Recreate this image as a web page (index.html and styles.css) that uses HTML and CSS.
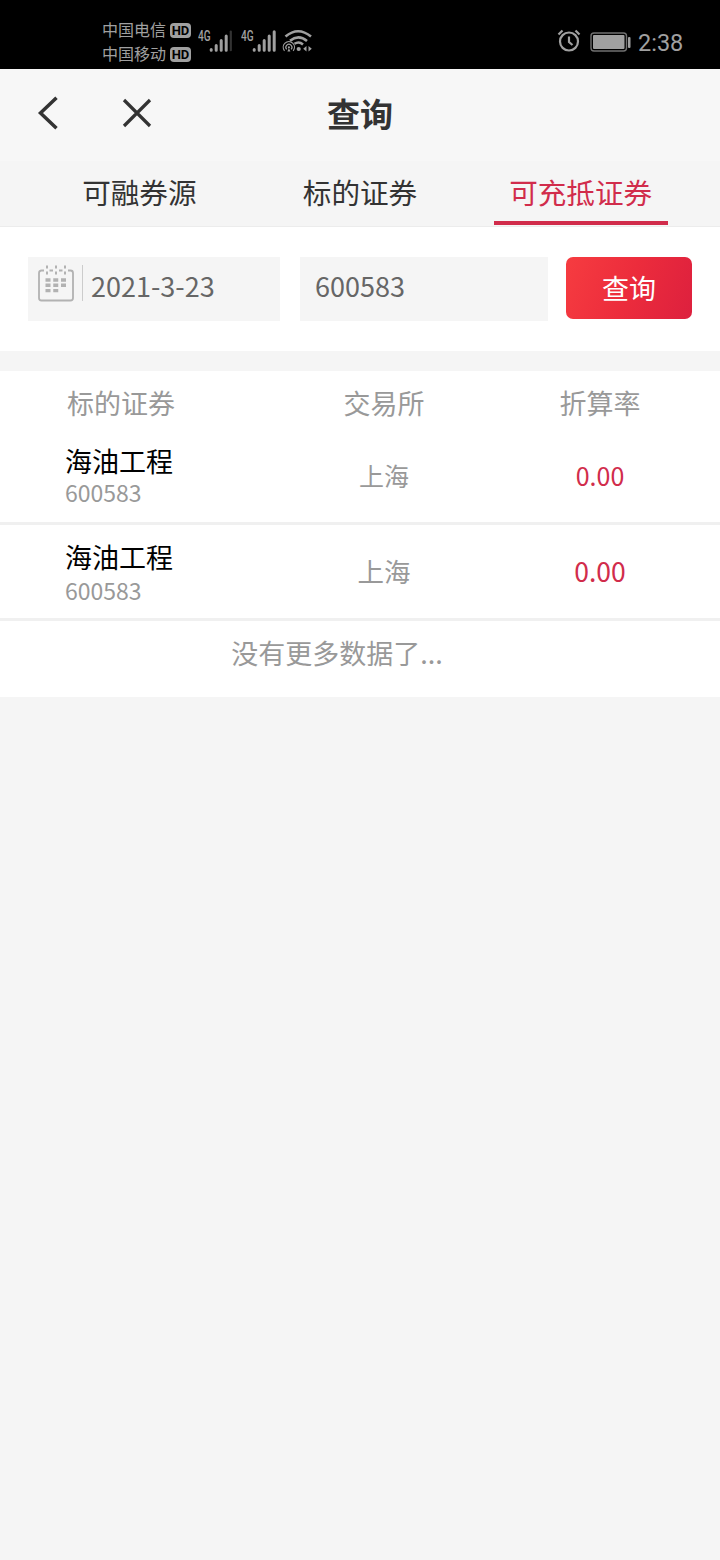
FILE: index.html
```html
<!DOCTYPE html>
<html lang="zh-CN">
<head>
	<meta charset="utf-8">
	<title>查询</title>
	<link rel="stylesheet" href="styles.css">
</head>
<body>
	<div class="status-bar">
		<div class="carriers">
			<div class="carrier">中国电信<span class="hd">HD</span></div>
			<div class="carrier">中国移动<span class="hd">HD</span></div>
		</div>
		<div class="signal">
			<span class="net">4G</span>
			<svg width="23" height="24" viewBox="0 0 23 24" stroke="#a0a0a0" stroke-width="3" stroke-linecap="round">
				<path d="M2.2 20.5v.7M7.200 16.5v4.7M12.200 11.5v9.7M17.200 7v14.2"/>
				<path d="M21.8 2.5v18.7" stroke="#333" stroke-width="2.2"/>
			</svg>
		</div>
		<div class="signal">
			<span class="net">4G</span>
			<svg width="24" height="24" viewBox="0 0 24 24" stroke="#a0a0a0" stroke-width="3" stroke-linecap="round">
				<path d="M2.2 20.5v.7M7.2 16.5v4.7M12.2 11.5v9.7M17.2 7v14.2M22.2 2.7v18.5"/>
			</svg>
		</div>
		<svg class="wifi" width="31" height="24" viewBox="0 0 31 24" fill="none" stroke="#a0a0a0">
			<path d="M3.5 7.5Q16-3 29 7.5M8 11.8Q16.5 5 25 12" stroke-width="2.6"/>
			<path d="M12.5 14.8Q17 11.8 21 15.5" stroke-width="2.4"/>
			<path d="M2.5 21.8a5.6 5.6 0 1 1 8.7 0M4.7 20.3a3 3 0 1 1 4.4 0" stroke-width="1.2"/>
			<circle cx="6.9" cy="18.3" r="1.1" fill="#a0a0a0" stroke="none"/>
			<path d="M5.4 22.5l1.5-3.5 1.5 3.5z" fill="#a0a0a0" stroke="none"/>
			<circle cx="16.7" cy="20" r="2.1" fill="#a0a0a0" stroke="none"/>
			<path d="M24.5 17v5.5l-3.3-2.7zM26.5 17v5.5l3.3-2.7z" fill="#a0a0a0" stroke="none"/>
		</svg>
		<svg class="alarm" width="24" height="24" viewBox="0 0 24 24" fill="none" stroke="#a0a0a0" stroke-width="2.2">
			<circle cx="12" cy="12.5" r="9"/>
			<path d="M12 7.5v5.500l3.5 3M1.5 5.500L5.5 1.5M22.5 5.5l-4-4"/>
		</svg>
		<svg class="battery" width="42" height="22" viewBox="0 0 42 22">
			<rect x="1" y="2" width="35.5" height="18" rx="3" fill="none" stroke="#707070" stroke-width="1.4"/>
			<rect x="3" y="4" width="31.5" height="14" rx="1" fill="#a0a0a0"/>
			<rect x="38" y="6" width="2.5" height="11" rx="1" fill="#a0a0a0"/>
		</svg>
		<span class="clock">2:38</span>
	</div>

	<div class="header">
		<svg class="back" width="24" height="36" viewBox="0 0 24 36" fill="none" stroke="#333" stroke-width="3.5">
			<path d="M20.5 2.7L4.5 18l16 15.3"/>
		</svg>
		<svg class="close" width="30" height="30" viewBox="0 0 30 30" fill="none" stroke="#333" stroke-width="3.2">
			<path d="M2 2l26 26M28 2L2 28"/>
		</svg>
		<h1>查询</h1>
	</div>

	<div class="tabs">
		<div class="tab">可融券源</div>
		<div class="tab">标的证券</div>
		<div class="tab active">可充抵证券</div>
	</div>

	<div class="search">
		<div class="field date">
			<svg width="36" height="38" viewBox="0 0 36 38" fill="none" stroke="#b2b2b2">
				<path d="M6 5.5H3.5q-2.500 0-2.500 2.500v25q0 2.500 2.500 2.500h29q2.500 0 2.500-2.500V8q0-2.500-2.500-2.500H30M11.5 5.5h3.500M21 5.5h3.500" stroke-width="1.8"/>
				<path d="M9 .5v3M9 6.5v3M18 .5v3M18 6.5v3M27 .5v3M27 6.5v3" stroke-width="2"/>
				<path d="M7.5 15h20.500M7.5 20.300h20.500" stroke-width="3.4" stroke-dasharray="5 2.750"/>
				<path d="M7.5 25.600h12.750" stroke-width="3.4" stroke-dasharray="5 2.750"/>
			</svg>
			<span class="date-text">2021-3-23</span>
		</div>
		<div class="field code-field">600583</div>
		<button class="submit">查询</button>
	</div>

	<div class="list">
		<div class="row head">
			<div class="name">标的证券</div>
			<div>交易所</div>
			<div>折算率</div>
		</div>
		<div class="row first">
			<div class="stock">
				<div class="stock-name">海油工程</div>
				<div class="stock-code">600583</div>
			</div>
			<div class="market">上海</div>
			<div class="rate">0.00</div>
		</div>
		<div class="row second">
			<div class="stock">
				<div class="stock-name">海油工程</div>
				<div class="stock-code">600583</div>
			</div>
			<div class="market">上海</div>
			<div class="rate">0.00</div>
		</div>
		<div class="no-more">没有更多数据了...</div>
	</div>
</body>
</html>
```

FILE: styles.css
```css
* {
	box-sizing: border-box;
}

body {
	margin: 0;
	min-height: 1560px;
	background-color: #f5f5f5;
	font-family: "Noto Sans CJK SC", sans-serif;
	color: #333;
}

svg {
	display: block;
	flex: none;
}

/* status bar */
.status-bar {
	display: flex;
	align-items: flex-start;
	height: 69px;
	padding: 18px 0 0 102px;
	background-color: #000;
	color: #a0a0a0;
}

.carriers {
	width: 95px;
}

.carrier {
	display: flex;
	align-items: flex-start;
	height: 24px;
	font-size: 16px;
	line-height: 22px;
}

.hd {
	width: 21px;
	height: 15px;
	margin: 5px 0 0 4px;
	border-radius: 4px;
	background-color: #a0a0a0;
	color: #000;
	font: bold 13px/15px Roboto, sans-serif;
	text-align: center;
}

.signal {
	display: flex;
	width: 43px;
	padding-top: 11px;
}

.net {
	width: 12px;
	margin-left: 1px;
	margin-right: -1px;
	font: 500 14px/14px Roboto, sans-serif;
	transform: scaleX(0.72);
	transform-origin: left;
}

.wifi {
	margin: 11px 0 0 -1px;
}

.alarm {
	margin: 11px 0 0 244px;
}

.battery {
	margin: 13px 0 0 9px;
}

.clock {
	margin: 11px 0 0 6px;
	font: 23.5px/28px Roboto, sans-serif;
}

/* title bar */
.header {
	display: grid;
	grid-template-columns: 84px 120px 312px;
	align-items: center;
	height: 92px;
	padding: 0 0 5px 36px;
	background-color: #f7f7f7;
}

.close {
	margin-left: 2px;
}

h1 {
	margin: 0;
	font-size: 33px;
	line-height: 40px;
	text-align: center;
	padding-right: 72px;
}

/* tabs */
.tabs {
	display: grid;
	grid-template-columns: repeat(3, 1fr);
	height: 66px;
	padding: 0 29px;
	border-bottom: 1px solid #ececec;
}

.tab {
	height: 64px;
	font-size: 28.6px;
	line-height: 61px;
	text-align: center;
}

.active {
	justify-self: center;
	width: 174px;
	border-bottom: 4px solid #d12c4b;
	color: #d12c4b;
}

/* search form */
.search {
	display: flex;
	align-items: flex-start;
	height: 124px;
	padding: 30px 28px 0;
	background-color: #fff;
}

.field {
	height: 64px;
	background-color: #f5f5f5;
	color: #666;
	font-size: 27px;
	line-height: 58px;
}

.date {
	display: flex;
	width: 252px;
	padding: 8px 0 0 10px;
}

.date-text {
	height: 36px;
	margin-left: 8px;
	padding-left: 8px;
	border-left: 1px solid #ccc;
	line-height: 42px;
}

.code-field {
	width: 248px;
	margin-left: 20px;
	padding-left: 15px;
}

.submit {
	width: 126px;
	height: 62px;
	margin-left: 18px;
	padding: 0;
	border: none;
	border-radius: 7px;
	background: linear-gradient(110deg, #f63c40, #ec2c3c 50%, #dd203e);
	color: #fff;
	font-family: inherit;
	font-size: 27px;
	line-height: 60px;
}

/* result list */
.list {
	margin-top: 20px;
	height: 326px;
	background-color: #fff;
	color: #999;
}

.row {
	display: grid;
	grid-template-columns: 276px 216px 216px;
	text-align: center;
}

.head {
	height: 61px;
	font-size: 27px;
	line-height: 63px;
}

.name {
	padding-left: 67px;
	text-align: left;
}

.first {
	height: 93px;
	border-bottom: 3px solid #f0f0f0;
	font-size: 25px;
	line-height: 86px;
}

.second {
	height: 96px;
	border-bottom: 3px solid #f0f0f0;
	font-size: 26.5px;
	line-height: 91px;
}

.stock {
	padding: 13px 0 0 65px;
	text-align: left;
}

.second .stock {
	padding-top: 16px;
}

.stock-name {
	color: #000;
	font-size: 27px;
	line-height: 32px;
}

.stock-code {
	font-size: 23px;
	line-height: 30px;
}

.second .stock-code {
	line-height: 34px;
}

.rate {
	color: #d12c4b;
}

.no-more {
	padding-right: 46px;
	font-size: 27px;
	line-height: 63px;
	text-align: center;
}
```
